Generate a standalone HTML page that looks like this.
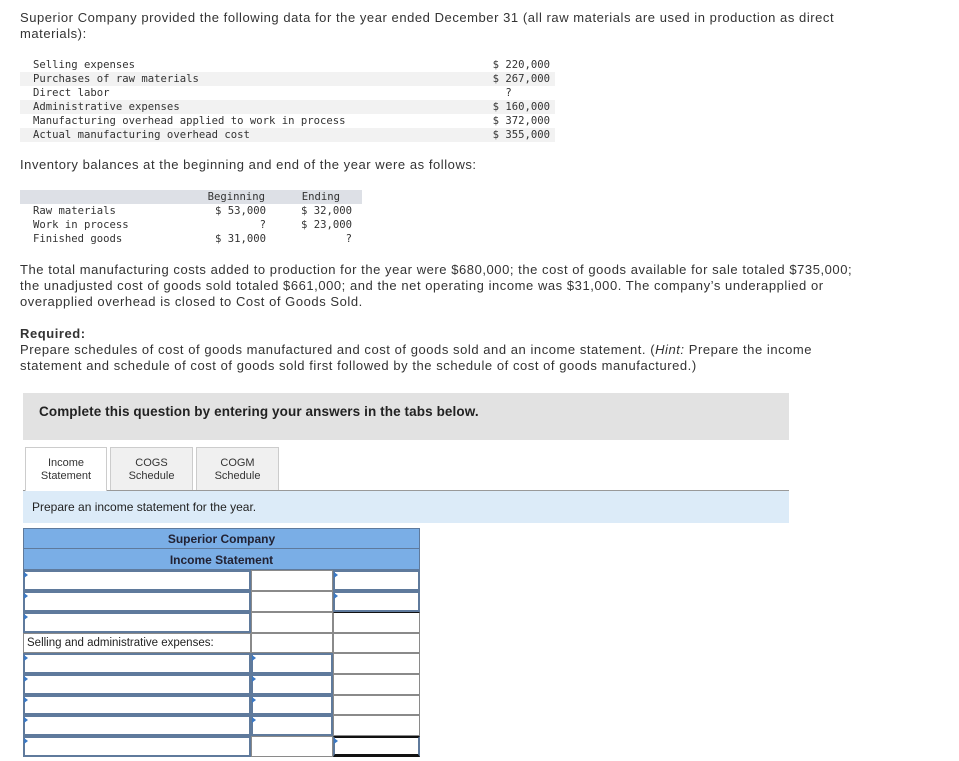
<!DOCTYPE html>
<html><head><meta charset="utf-8"><style>
body{margin:0;width:959px;height:761px;background:#fff;position:relative;font-family:"Liberation Sans",sans-serif;color:#333;overflow:hidden}
.a{position:absolute}
.p{font-size:13px;line-height:16px;color:#333;left:20px;width:862px;letter-spacing:0.55px}
.m{font-family:"DejaVu Sans Mono","Liberation Mono",monospace;font-size:10.6px;line-height:14px;color:#333}
.c{position:absolute;box-sizing:border-box;border:1px solid #8a8a8a;background:#fff}
.i{position:absolute;box-sizing:border-box;border:2px solid #5f7a9c;background:#fff}
.i:before{content:"";position:absolute;left:-1px;top:0;border-left:4px solid #3a78c4;border-top:3px solid transparent;border-bottom:3px solid transparent}
</style></head><body>
<div class="a p" style="top:10px;width:830px">Superior Company provided the following data for the year ended December 31 (all raw materials are used in production as direct materials):</div>

<div class="a" style="left:20px;top:72px;width:535px;height:14px;background:#f2f2f2"></div>
<div class="a" style="left:20px;top:100px;width:535px;height:14px;background:#f2f2f2"></div>
<div class="a" style="left:20px;top:128px;width:535px;height:14px;background:#f2f2f2"></div>
<div class="a m" style="left:33px;top:58px">Selling expenses<br>Purchases of raw materials<br>Direct labor<br>Administrative expenses<br>Manufacturing overhead applied to work in process<br>Actual manufacturing overhead cost</div>
<div class="a m" style="left:470px;top:58px;width:80px;text-align:right">$ 220,000<br>$ 267,000<br>?&nbsp;&nbsp;&nbsp;&nbsp;&nbsp;&nbsp;<br>$ 160,000<br>$ 372,000<br>$ 355,000</div>

<div class="a p" style="top:157px">Inventory balances at the beginning and end of the year were as follows:</div>
<div class="a" style="left:20px;top:190px;width:342px;height:14px;background:#dde0e6"></div>
<div class="a m" style="left:33px;top:204px">Raw materials<br>Work in process<br>Finished goods</div>
<div class="a m" style="left:180px;top:190px;width:86px;text-align:right"><span style="margin-right:1px">Beginning</span><br>$ 53,000<br>?<br>$ 31,000</div>
<div class="a m" style="left:280px;top:190px;width:72px;text-align:right"><span style="margin-right:12px">Ending</span><br>$ 32,000<br>$ 23,000<br>?</div>

<div class="a p" style="top:262px;width:852px">The total manufacturing costs added to production for the year were $680,000; the cost of goods available for sale totaled $735,000; the unadjusted cost of goods sold totaled $661,000; and the net operating income was $31,000. The company’s underapplied or overapplied overhead is closed to Cost of Goods Sold.</div>
<div class="a p" style="top:326px;width:830px"><b>Required:</b><br>Prepare schedules of cost of goods manufactured and cost of goods sold and an income statement. (<i>Hint:</i> Prepare the income statement and schedule of cost of goods sold first followed by the schedule of cost of goods manufactured.)</div>

<div class="a" style="left:23px;top:393px;width:766px;height:47px;background:#e2e2e2"></div>
<div class="a" style="left:39px;top:404px;font-size:13.5px;font-weight:bold;color:#222;letter-spacing:0.1px">Complete this question by entering your answers in the tabs below.</div>

<div class="a" style="left:23px;top:490px;width:766px;height:1px;background:#999"></div>
<div class="a" style="left:25px;top:447px;width:82px;height:44px;background:#fff;border:1px solid #ccc;border-bottom:none;box-sizing:border-box;font-size:11px;line-height:13px;text-align:center;padding-top:9px">Income<br>Statement</div>
<div class="a" style="left:110px;top:447px;width:83px;height:43px;background:#f0f0f0;border:1px solid #ccc;border-bottom:none;box-sizing:border-box;font-size:11px;line-height:13px;text-align:center;padding-top:9px">COGS<br>Schedule</div>
<div class="a" style="left:196px;top:447px;width:83px;height:43px;background:#f0f0f0;border:1px solid #ccc;border-bottom:none;box-sizing:border-box;font-size:11px;line-height:13px;text-align:center;padding-top:9px">COGM<br>Schedule</div>
<div class="a" style="left:23px;top:491px;width:766px;height:32px;background:#dcebf8"></div>
<div class="a" style="left:32px;top:500px;font-size:12px;color:#222">Prepare an income statement for the year.</div>

<div class="a" style="left:23px;top:528px;width:397px;height:42px;background:#7aaee6;border:1px solid #5f7a9c;box-sizing:border-box"></div>
<div class="a" style="left:23px;top:548px;width:397px;height:1px;background:#5f7a9c"></div>
<div class="a" style="left:23px;top:532px;width:397px;text-align:center;font-size:12px;font-weight:bold;color:#223">Superior Company</div>
<div class="a" style="left:23px;top:553px;width:397px;text-align:center;font-size:12px;font-weight:bold;color:#223">Income Statement</div>

<div class="i" style="left:23px;top:570px;width:228px;height:21px"></div><div class="c" style="left:251px;top:570px;width:82px;height:21px"></div><div class="i" style="left:333px;top:570px;width:87px;height:21px"></div>
<div class="i" style="left:23px;top:591px;width:228px;height:21px"></div><div class="c" style="left:251px;top:591px;width:82px;height:21px"></div><div class="i" style="left:333px;top:591px;width:87px;height:21px"></div>
<div class="i" style="left:23px;top:612px;width:228px;height:21px"></div><div class="c" style="left:251px;top:612px;width:82px;height:21px"></div><div class="c" style="left:333px;top:612px;width:87px;height:21px;border-top:1px solid #111"></div>
<div class="c" style="left:23px;top:633px;width:228px;height:20px;font-size:11.5px;line-height:18px;padding-left:3px;color:#222">Selling and administrative expenses:</div><div class="c" style="left:251px;top:633px;width:82px;height:20px"></div><div class="c" style="left:333px;top:633px;width:87px;height:20px"></div>
<div class="i" style="left:23px;top:653px;width:228px;height:21px"></div><div class="i" style="left:251px;top:653px;width:82px;height:21px"></div><div class="c" style="left:333px;top:653px;width:87px;height:21px"></div>
<div class="i" style="left:23px;top:674px;width:228px;height:21px"></div><div class="i" style="left:251px;top:674px;width:82px;height:21px"></div><div class="c" style="left:333px;top:674px;width:87px;height:21px"></div>
<div class="i" style="left:23px;top:695px;width:228px;height:20px"></div><div class="i" style="left:251px;top:695px;width:82px;height:20px"></div><div class="c" style="left:333px;top:695px;width:87px;height:20px"></div>
<div class="i" style="left:23px;top:715px;width:228px;height:21px"></div><div class="i" style="left:251px;top:715px;width:82px;height:21px"></div><div class="c" style="left:333px;top:715px;width:87px;height:21px"></div>
<div class="i" style="left:23px;top:736px;width:228px;height:21px"></div><div class="c" style="left:251px;top:736px;width:82px;height:21px"></div><div class="i" style="left:333px;top:736px;width:87px;height:21px;border-top:2px solid #111;border-bottom:3px solid #111"></div>
</body></html>
